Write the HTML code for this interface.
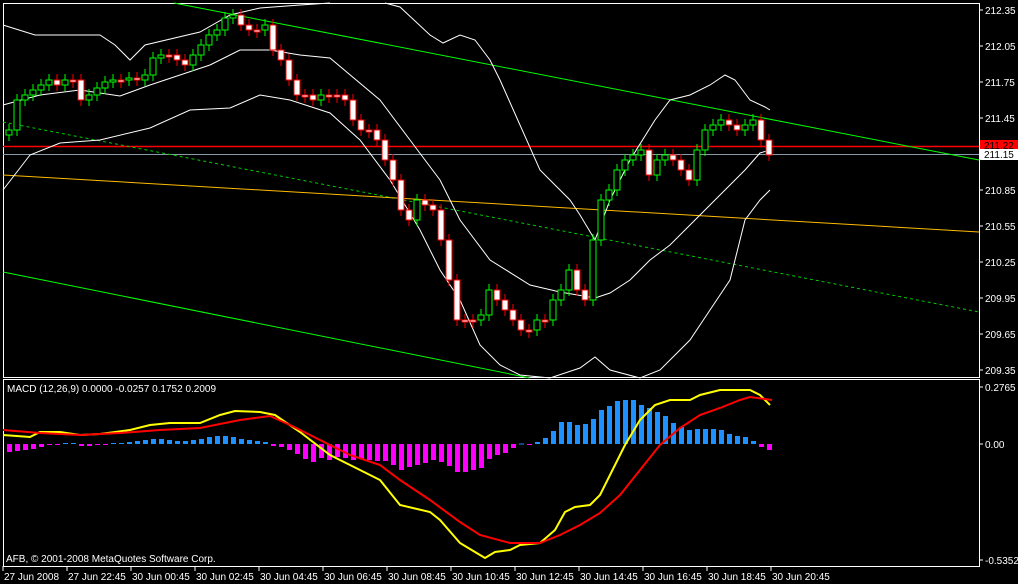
<!DOCTYPE html><html><head><style>
body{margin:0;background:#000;width:1018px;height:584px;overflow:hidden;font-family:"Liberation Sans",sans-serif}
svg{display:block}
text{font-family:"Liberation Sans",sans-serif;font-size:10px;fill:#fff}
</style></head><body>
<svg id="s" width="1018" height="584" viewBox="0 0 1018 584">
<rect x="0" y="0" width="1018" height="584" fill="#000"/>
<rect x="3.5" y="3.5" width="976" height="374" fill="none" stroke="#fff"/>
<rect x="3.5" y="379.5" width="976" height="187" fill="none" stroke="#fff"/>
<line x1="3" y1="146.5" x2="979" y2="146.5" stroke="#f00" stroke-width="1.5"/>
<line x1="3" y1="154.5" x2="979" y2="154.5" stroke="#8899aa"/>
<line x1="174" y1="3" x2="979" y2="160" stroke="#0f0"/>
<line x1="3" y1="272" x2="530" y2="378" stroke="#0f0"/>
<line x1="3" y1="122" x2="979" y2="312" stroke="#0c0" stroke-dasharray="3,3"/>
<line x1="3" y1="175" x2="979" y2="232" stroke="#fb0"/>
<g fill="none" stroke="#fff" stroke-width="1">
<polyline points="3,25 35,35 100,35 115,45 130,60 145,45 200,32 230,15 260,8 300,5 330,3"/>
<polyline points="385,3 400,7 430,35 443,43 460,35 475,40 490,60 500,80 520,125 540,170 555,185 570,200 580,215 595,240 610,200 630,160 655,120 670,100 690,95 710,85 725,75 735,80 750,100 765,107 770,110"/>
<polyline points="3,105 40,95 80,90 120,96 150,85 180,75 210,65 240,50 270,50 300,55 330,58 380,100 410,140 440,180 460,220 490,260 530,285 560,292 595,298 610,293 630,280 650,260 670,245 690,225 710,205 730,185 745,170 760,153 770,150"/>
<polyline points="3,190 30,155 60,143 100,140 150,128 190,110 230,108 260,95 290,100 330,113 360,140 390,180 420,230 440,270 460,300 480,345 500,365 520,375 550,378 580,368 595,357 610,370 640,378 660,370 690,340 710,310 730,280 745,220 760,200 770,190"/>
</g>
<g id="cd"></g>
<g id="hist"></g>
<polyline fill="none" stroke="#ff0" stroke-width="2" points="3,435 30,437 40,432 60,432 80,435 100,434 130,430 150,425 170,423 200,423 220,415 235,411 260,412 275,415 300,432 330,455 360,470 380,480 400,505 430,512 440,520 460,543 475,552 485,558 495,552 510,550 520,545 540,543 555,530 565,512 575,507 590,505 600,495 610,475 625,445 640,420 655,405 670,400 690,400 700,395 720,390 750,390 760,395 770,405"/>
<polyline fill="none" stroke="#f00" stroke-width="2" points="3,430 40,433 80,435 120,433 160,430 200,428 240,420 270,416 290,425 320,440 350,455 380,465 400,480 430,500 460,522 480,535 510,543 540,543 560,535 580,525 600,513 620,495 640,470 660,445 680,428 700,415 720,408 740,400 750,397 772,400"/>
<text x="7" y="392">MACD  (12,26,9) 0.0000 -0.0257 0.1752 0.2009</text>
<text x="6" y="562">AFB, © 2001-2008 MetaQuotes Software Corp.</text>
<g id="ax"></g>
<rect x="980" y="140" width="38" height="11" fill="#f00"/>
<text x="984" y="149" style="fill:#000">211.22</text>
<rect x="980" y="149" width="38" height="11" fill="#fff"/>
<text x="984" y="158" style="fill:#000">211.15</text>
</svg>
<script>
var NS="http://www.w3.org/2000/svg";
function el(p,t,a){var e=document.createElementNS(NS,t);for(var k in a)e.setAttribute(k,a[k]);p.appendChild(e);return e}
var C=[130,100,95,90,85,80,85,80,80,100,95,88,82,80,80,78,80,75,58,55,55,60,65,55,45,35,30,18,15,25,30,30,25,50,60,80,95,95,100,95,95,95,100,120,130,130,140,160,180,210,220,200,205,210,240,280,320,320,320,315,290,300,310,320,330,330,320,320,300,290,270,290,300,240,200,190,170,160,155,150,175,160,155,160,170,180,150,130,125,120,125,130,125,120,140,155];
var cd=document.getElementById("cd");
for(var i=0;i<C.length;i++){var x=9+i*8,o=i?C[i-1]:135,c=C[i];var t=Math.min(o,c),b=Math.max(o,c);if(b-t<2)b=t+2;
el(cd,"line",{x1:x,y1:t-6,x2:x,y2:b+6,stroke:c<o?"#0f0":"#f00"});
el(cd,"rect",{x:x-3,y:t,width:6,height:b-t,fill:c<o?"#000":"#fff",stroke:c<o?"#0f0":"#f00"});}
var H=[-8,-7,-6,-5,-3,-1,-1,1,1,-2,-2,-1,-1,1,1,2,3,4,5,5,4,3,3,4,5,7,8,8,7,5,4,3,2,-2,-3,
-6,-10,-15,-18,-14,-16,-13,-14,-16,-15,-16,-17,-17,
-21,-26,-23,-21,-19,-16,-18,-22,-28,-28,-26,-24,-15,-11,-9,-4,
0.5,-0.5,2,
6,13,22,22,19,20,25,34,38,43,44,44,39,36,32,28,21,17,14,15,15,15,14,10,8,7,3,-3,-6];
var h=document.getElementById("hist");
for(var i=0;i<H.length;i++){var x=9+i*8,v=H[i];
var y=v>0?444-v:444;el(h,"rect",{x:x-2,y:y,width:5,height:Math.max(Math.abs(v),1),fill:v>0?"#1e90ff":"#f0f"});}
var ax=document.getElementById("ax");
var P=[["212.35",10],["212.05",46],["211.75",82],["211.45",118],["210.85",190],["210.55",226],["210.25",262],["209.95",298],["209.65",334],["209.35",370],["0.2765",387],["0.00",444],["-0.5352",560]];
P.forEach(function(p){el(ax,"line",{x1:979,y1:p[1],x2:983,y2:p[1],stroke:"#fff"});var t=el(ax,"text",{x:985,y:p[1]+4});t.textContent=p[0];});
var T=["27 Jun 2008","27 Jun 22:45","30 Jun 00:45","30 Jun 02:45","30 Jun 04:45","30 Jun 06:45","30 Jun 08:45","30 Jun 10:45","30 Jun 12:45","30 Jun 14:45","30 Jun 16:45","30 Jun 18:45","30 Jun 20:45"];
T.forEach(function(s,i){var x=3+i*64;el(ax,"line",{x1:x,y1:566,x2:x,y2:571,stroke:"#fff"});var t=el(ax,"text",{x:x+1,y:580});t.textContent=s;});
</script>
</body></html>
